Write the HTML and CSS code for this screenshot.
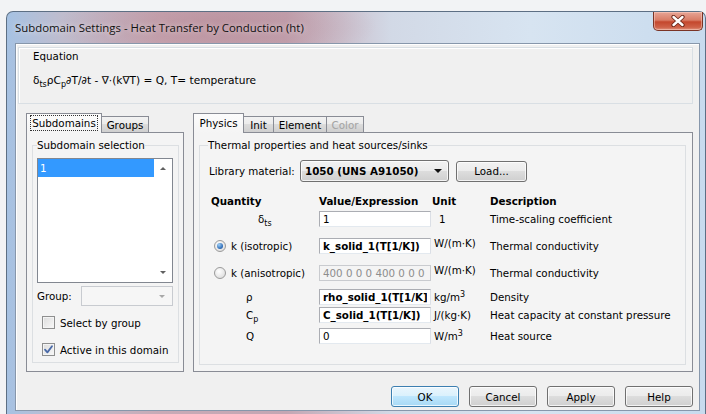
FILE: index.html
```html
<!DOCTYPE html>
<html lang="en">
<head>
<meta charset="utf-8">
<title>Subdomain Settings</title>
<link rel="stylesheet" href="styles.css">
</head>
<body>
<div class="window">
  <header class="titlebar">
    <h1 class="title">Subdomain Settings - Heat Transfer by Conduction (ht)</h1>
    <button class="close" aria-label="Close">
      <svg width="16" height="12" viewBox="0 0 16 12"><path d="M3.5 2 L12.5 10 M12.5 2 L3.5 10" stroke="#6a2517" stroke-width="4.2" stroke-linecap="round"/><path d="M3.5 2 L12.5 10 M12.5 2 L3.5 10" stroke="#fff" stroke-width="2.4" stroke-linecap="round"/></svg>
    </button>
  </header>

  <main class="client">
    <section class="equation">
      <div class="eq-label">Equation</div>
      <div class="eq-text">δ<sub>ts</sub>ρC<sub>p</sub>∂T/∂t - ∇·(k∇T) = Q, T= temperature</div>
    </section>

    <div class="panes">
      <div class="pane pane-left">
        <div class="tabstrip">
          <div class="tab active tab-subdomains"><span class="focus">Subdomains</span></div>
          <div class="tab tab-groups">Groups</div>
        </div>
        <div class="tabpanel">
          <fieldset class="group group-left">
            <legend>Subdomain selection</legend>
            <div class="listbox">
              <div class="list-items">
                <div class="list-item selected">1</div>
              </div>
              <div class="vscroll">
                <span class="tri tri-up"></span>
                <span class="tri tri-down"></span>
              </div>
            </div>
            <div class="group-row">
              <span class="group-label">Group:</span>
              <div class="combo-disabled"><span class="tri tri-down tri-faint"></span></div>
            </div>
            <label class="check check-first"><span class="box"></span>Select by group</label>
            <label class="check check-second"><span class="box">
              <svg width="11" height="11" viewBox="0 0 11 11"><path d="M2 5.6 L4.4 8.4 L9 2.2" fill="none" stroke="#4a6aa8" stroke-width="1.8" stroke-linejoin="round" stroke-linecap="round"/></svg>
            </span>Active in this domain</label>
          </fieldset>
        </div>
      </div>

      <div class="pane pane-right">
        <div class="tabstrip">
          <div class="tab active tab-physics">Physics</div>
          <div class="tab tab-init">Init</div>
          <div class="tab tab-element">Element</div>
          <div class="tab tab-color">Color</div>
        </div>
        <div class="tabpanel">
          <fieldset class="group group-right">
            <legend>Thermal properties and heat sources/sinks</legend>
            <div class="library">
              <span class="lib-label">Library material:</span>
              <div class="dropdown"><span class="dropdown-value">1050 (UNS A91050)</span><span class="caret"></span></div>
              <button class="btn btn-load">Load...</button>
            </div>

            <div class="qtable">
              <div class="th th-first">Quantity</div>
              <div class="th">Value/Expression</div>
              <div class="th">Unit</div>
              <div class="th">Description</div>

              <div class="sym sym-delta">δ<sub>ts</sub></div>
              <input class="field" value="1">
              <div class="unit unit-one">1</div>
              <div class="desc">Time-scaling coefficient</div>

              <label class="radio"><span class="dot on"></span>k (isotropic)</label>
              <input class="field bold" value="k_solid_1(T[1/K])">
              <div class="unit raise">W/(m·K)</div>
              <div class="desc">Thermal conductivity</div>

              <label class="radio"><span class="dot"></span>k (anisotropic)</label>
              <input class="field disabled" value="400 0 0 0 400 0 0 0 400" disabled>
              <div class="unit raise">W/(m·K)</div>
              <div class="desc">Thermal conductivity</div>

              <div class="sym">ρ</div>
              <input class="field bold" value="rho_solid_1(T[1/K])">
              <div class="unit">kg/m<sup>3</sup></div>
              <div class="desc">Density</div>

              <div class="sym">C<sub>p</sub></div>
              <input class="field bold" value="C_solid_1(T[1/K])">
              <div class="unit">J/(kg·K)</div>
              <div class="desc">Heat capacity at constant pressure</div>

              <div class="sym">Q</div>
              <input class="field" value="0">
              <div class="unit">W/m<sup>3</sup></div>
              <div class="desc">Heat source</div>
            </div>
          </fieldset>
        </div>
      </div>
    </div>

    <footer class="actions">
      <button class="btn btn-default">OK</button>
      <button class="btn">Cancel</button>
      <button class="btn">Apply</button>
      <button class="btn">Help</button>
    </footer>
  </main>
</div>
</body>
</html>
```

FILE: styles.css
```css
* { box-sizing: border-box; }

html, body { margin: 0; }

body {
  width: 706px;
  height: 414px;
  overflow: hidden;
  background: #f2f3f5;
  font-family: "DejaVu Sans", "Liberation Sans", sans-serif;
  font-size: 10.3px;
  color: #000;
}

/* ---------- window frame ---------- */
.window {
  margin: 11px 0 0 6px;
  width: 700px;
  height: 405px;
  border: 1px solid #5d6f84;
  border-bottom: none;
  border-radius: 7px 7px 0 0;
  padding: 0 5px 5px 8px;
  display: flex;
  flex-direction: column;
  background:
    radial-gradient(ellipse 160px 40px at 210px 14px, rgba(178,128,140,.55), rgba(178,128,140,0)),
    linear-gradient(90deg, #a6c2e3 0, #bfbccd 8%, #c9aab6 22%, #c4a6b3 40%, #d2d9e6 55%, #d7e4f1 75%, #c8dbee 100%);
}

.titlebar {
  height: 31px;
  display: flex;
  align-items: flex-start;
  flex: none;
}

.title {
  margin: 0;
  padding-top: 8px;
  font-family: "Open Sans", "Noto Sans", sans-serif;
  font-weight: normal;
  font-size: 11.4px;
  line-height: 15px;
  color: #111;
  text-shadow: 0 0 6px rgba(255,255,255,.8);
}

.close {
  margin-left: auto;
  margin-right: -3px;
  width: 50px;
  height: 19px;
  padding: 0;
  border: 1px solid #7a3426;
  border-top: none;
  border-radius: 0 0 5px 5px;
  background: linear-gradient(#e7a596 0, #d97c66 45%, #c4472d 55%, #cf6249 85%, #e09580 100%);
  box-shadow: inset 0 0 0 1px rgba(255,220,210,.45);
  display: flex;
  align-items: center;
  justify-content: center;
}

/* ---------- client area ---------- */
.client {
  flex: 1;
  background: #f0f0f0;
  border: 1px solid #8797ab;
  box-shadow: inset 1px 1px 0 #fff;
  padding: 3px 6px 0 2px;
  display: flex;
  flex-direction: column;
}

.equation {
  height: 57px;
  border: 1px solid #d9dfe4;
  box-shadow: inset 1px 1px 0 #fff;
  padding: 1px 0 0 14px;
}

.eq-label { line-height: 14px; }

.eq-text {
  margin-top: 10px;
  line-height: 14px;
  font-size: 10.6px;
}

sub, sup {
  font-size: 8px;
  line-height: 0;
}
sub { vertical-align: -3px; }
sup { vertical-align: 4px; }

/* ---------- panes with tabs ---------- */
.panes {
  margin-top: 9px;
  padding-left: 8px;
  display: flex;
  gap: 9px;
}

.pane { display: flex; flex-direction: column; }
.pane-left { width: 158px; }
.pane-right { width: 500px; }

.tabstrip {
  height: 19px;
  display: flex;
  align-items: flex-end;
}

.tab {
  height: 16px;
  border: 1px solid #898c95;
  border-bottom: none;
  margin-left: -1px;
  background: linear-gradient(#f2f2f2 0, #ebebeb 50%, #dcdcdc 50%, #cfcfcf 100%);
  display: flex;
  align-items: center;
  justify-content: center;
  line-height: 14px;
}
.tab:first-child { margin-left: 0; }

.tab.active {
  height: 20px;
  margin-bottom: -1px;
  background: linear-gradient(#fcfcfc, #f4f4f4);
  position: relative;
  z-index: 1;
  padding-bottom: 2px;
}

.focus {
  outline: 1px dotted #333;
  outline-offset: 0;
  padding: 0 1px;
}

.tab-subdomains { width: 76px; }
.tab-groups { width: 48px; }
.tab-physics { width: 51px; }
.tab-init { width: 31px; }
.tab-element { width: 54px; }
.tab-color { width: 38px; color: #a3a3a3; }

.tabpanel {
  height: 240px;
  border: 1px solid #898c95;
  background: #f4f4f4;
  padding: 5px 0 0 5px;
}

fieldset.group {
  margin: 0;
  min-width: 0;
  border: 1px solid #dcdfe2;
  padding: 0 0 0 4px;
}

fieldset.group legend {
  padding: 0;
  line-height: 14px;
}

.group-left { width: 147px; height: 225px; }
.group-right { width: 487px; height: 227px; padding-left: 8px !important; }

/* ---------- left pane controls ---------- */
.listbox {
  margin-top: 6px;
  width: 136px;
  height: 125px;
  border: 1px solid #828790;
  background: #fff;
  display: flex;
}

.list-items { flex: 1; }

.list-item {
  height: 18px;
  line-height: 18px;
  padding-left: 2px;
}
.list-item.selected { background: #3399ff; color: #fff; }

.vscroll {
  width: 18px;
  display: flex;
  flex-direction: column;
  justify-content: space-between;
  align-items: center;
  padding: 8px 0 8px;
}

.tri {
  width: 0;
  height: 0;
  border-left: 3px solid transparent;
  border-right: 3px solid transparent;
}
.tri-up { border-bottom: 3px solid #606060; }
.tri-down { border-top: 3px solid #606060; }
.tri-faint { border-top-color: #a8a8a8; }

.group-row {
  margin-top: 3px;
  height: 20px;
  display: flex;
  align-items: center;
}

.group-label { width: 44px; }

.combo-disabled {
  width: 92px;
  height: 20px;
  border: 1px solid #c8cbd0;
  background: #f6f6f6;
  display: flex;
  align-items: center;
  justify-content: flex-end;
  padding-right: 7px;
}

.check {
  display: flex;
  align-items: center;
  height: 13px;
  padding-left: 5px;
  gap: 5px;
}
.check-first { margin-top: 10px; }
.check-second { margin-top: 14px; }

.box {
  width: 13px;
  height: 13px;
  border: 1px solid #8e8f8f;
  background: linear-gradient(135deg, #dcdcdc, #f8f8f8);
  box-shadow: inset 0 0 0 1px #f4f4f4;
  display: flex;
  align-items: center;
  justify-content: center;
}

/* ---------- right pane controls ---------- */
.library {
  margin-top: 8px;
  height: 22px;
  display: flex;
  align-items: center;
}

.lib-label { width: 92px; padding-left: 1px; }

.dropdown {
  width: 149px;
  height: 22px;
  border: 1px solid #707070;
  border-radius: 3px;
  background: linear-gradient(#f2f2f2 0, #ebebeb 50%, #dddddd 50%, #cfcfcf 100%);
  box-shadow: inset 0 0 0 1px rgba(255,255,255,.75);
  display: flex;
  align-items: center;
  padding: 0 6px 0 4px;
  font-weight: bold;
}

.caret {
  margin-left: auto;
  width: 0;
  height: 0;
  border-left: 4px solid transparent;
  border-right: 4px solid transparent;
  border-top: 4px solid #111;
}

.btn {
  height: 21px;
  padding: 0;
  border: 1px solid #707070;
  border-radius: 3px;
  background: linear-gradient(#f2f2f2 0, #ebebeb 50%, #dddddd 50%, #cfcfcf 100%);
  box-shadow: inset 0 0 0 1px rgba(255,255,255,.75);
  font-family: "DejaVu Sans", "Liberation Sans", sans-serif;
  font-size: 10.3px;
  color: #000;
}

.btn-load { width: 71px; margin-left: 7px; }

.qtable {
  margin-top: 11px;
  display: grid;
  grid-template-columns: 111px 113px 58px 1fr;
  grid-template-rows: 18px 27px 27px 24px 18px 21px 18px;
  align-items: start;
}

.qtable > * {
  height: 16px;
  line-height: 16px;
  white-space: nowrap;
}

.th { font-weight: bold; }
.th-first { padding-left: 3px; }

.sym { padding-left: 38px; }
.sym-delta { padding-left: 50px; }

.radio {
  display: flex;
  align-items: center;
  gap: 5px;
  padding-left: 6px;
}

.dot {
  width: 12px;
  height: 12px;
  border-radius: 50%;
  border: 1px solid #9a9a9a;
  background: radial-gradient(circle at 40% 35%, #fff, #d6d6d6);
  display: flex;
  align-items: center;
  justify-content: center;
}
.dot.on::after {
  content: "";
  width: 6px;
  height: 6px;
  border-radius: 50%;
  background: radial-gradient(circle at 35% 30%, #9fd0f7, #2a68b4 70%, #1d4f8f);
}

.field {
  width: 112px;
  border: 1px solid #abadb3;
  border-right-color: #dbdfe6;
  border-bottom-color: #e3e9ef;
  background: #fff;
  padding: 0 3px;
  margin: 0;
  font-family: "DejaVu Sans", "Liberation Sans", sans-serif;
  font-size: 10.3px;
  color: #000;
  outline: none;
}
.field.bold { font-weight: bold; }
.field.disabled {
  background: #f4f4f4;
  color: #8d8d8d;
  border-color: #c9cbcf;
}

.unit { padding-left: 2px; }
.unit-one { padding-left: 7px; }
.raise { line-height: 11px; }

/* ---------- dialog buttons ---------- */
.actions {
  margin-top: 14px;
  display: flex;
  justify-content: flex-end;
  gap: 10px;
  padding-right: 0;
}

.actions .btn { width: 68px; }

.btn-default {
  border-color: #3c7fb1;
  background: linear-gradient(#eaf6fd 0, #d9f0fc 50%, #bee6fd 50%, #a7d9f5 100%);
}
```
